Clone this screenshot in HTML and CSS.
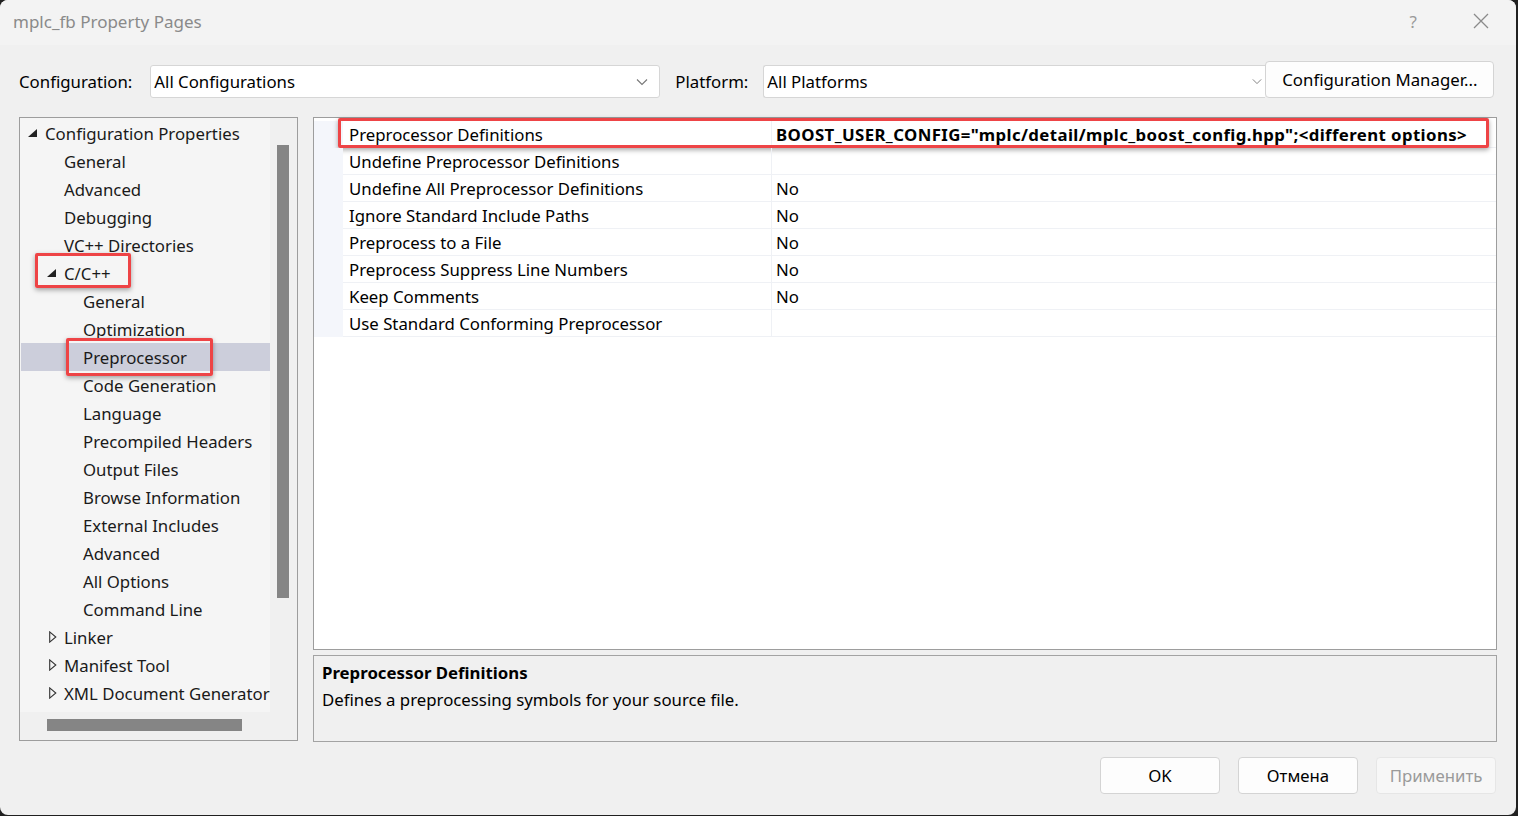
FILE: index.html
```html
<!DOCTYPE html>
<html lang="ru">
<head>
  <meta charset="UTF-8"/>
  <title>mplc_fb Property Pages</title>
  <link rel="stylesheet" href="styles.css">
</head>
<body>
  <div class="window">
    <div class="titlebar">
      <span class="win-title">mplc_fb Property Pages</span>
      <span class="help">?</span>
      <span class="close">
        <svg viewBox="0 0 16 16" width="16" height="16"><path d="M1 1L15 15M15 1L1 15" stroke="#8a8a8a" stroke-width="1.3" fill="none"/></svg>
      </span>
    </div>

    <div class="config-row">
      <span class="label">Configuration:</span>
      <div class="combo combo-conf">
        <span>All Configurations</span>
        <svg class="chev" viewBox="0 0 12 8" width="12" height="8"><path d="M1 1.5L6 6.5L11 1.5" stroke="#777" stroke-width="1.1" fill="none"/></svg>
      </div>
      <span class="label label-plat">Platform:</span>
      <div class="combo combo-plat">
        <span>All Platforms</span>
        <svg class="chev" viewBox="0 0 12 8" width="10" height="7"><path d="M1 1.5L6 6.5L11 1.5" stroke="#777" stroke-width="1.1" fill="none"/></svg>
      </div>
      <button class="btn btn-manager">Configuration Manager...</button>
    </div>

    <div class="main">
      <div class="tree">
        <div class="tree-view">
          <div class="tree-list" id="tree"></div>
          <div class="vscroll"><div class="vthumb"></div></div>
        </div>
        <div class="hscroll"><div class="hthumb"></div></div>
      </div>

      <div class="right">
        <div class="grid">
          <div class="grid-rows" id="grid"></div>
        </div>
        <div class="desc">
          <div class="desc-title">Preprocessor Definitions</div>
          <div class="desc-text">Defines a preprocessing symbols for your source file.</div>
        </div>
      </div>
    </div>

    <div class="footer">
      <button class="btn btn-foot">OK</button>
      <button class="btn btn-foot">Отмена</button>
      <button class="btn btn-foot disabled">Применить</button>
    </div>
  </div>

  <script>
    // tree: [level, text, arrow, mark] arrow: "open" | "closed" | ""
    const treeItems = [
      [0, "Configuration Properties", "open"],
      [1, "General", ""],
      [1, "Advanced", ""],
      [1, "Debugging", ""],
      [1, "VC++ Directories", ""],
      [1, "C/C++", "open", "mark-cpp"],
      [2, "General", ""],
      [2, "Optimization", ""],
      [2, "Preprocessor", "", "mark-pre"],
      [2, "Code Generation", ""],
      [2, "Language", ""],
      [2, "Precompiled Headers", ""],
      [2, "Output Files", ""],
      [2, "Browse Information", ""],
      [2, "External Includes", ""],
      [2, "Advanced", ""],
      [2, "All Options", ""],
      [2, "Command Line", ""],
      [1, "Linker", "closed"],
      [1, "Manifest Tool", "closed"],
      [1, "XML Document Generator", "closed"]
    ];
    const openIcon = '<svg viewBox="0 0 9 8" width="9" height="8"><path d="M9 0V8H0Z" fill="#222"/></svg>';
    const closedIcon = '<svg viewBox="0 0 8 12" width="8" height="12"><path d="M0.7 0.9L6.8 6L0.7 11.1Z" fill="none" stroke="#333" stroke-width="1.1"/></svg>';

    const tree = document.getElementById('tree');
    tree.innerHTML = treeItems.map(([lvl, text, arrow, mark]) => {
      const icon = arrow == "open" ? openIcon : arrow == "closed" ? closedIcon : "";
      const sel = text == "Preprocessor" ? " selected" : "";
      const box = mark ? `<span class="mark ${mark}"></span>` : "";
      return `<div class="tree-row lvl${lvl}${sel}"><span class="arrow ${arrow}">${icon}</span><span class="tree-text">${text}</span>${box}</div>`;
    }).join("");

    const props = [
      ["Preprocessor Definitions", 'BOOST_USER_CONFIG="mplc/detail/mplc_boost_config.hpp";&lt;different options&gt;', true],
      ["Undefine Preprocessor Definitions", ""],
      ["Undefine All Preprocessor Definitions", "No"],
      ["Ignore Standard Include Paths", "No"],
      ["Preprocess to a File", "No"],
      ["Preprocess Suppress Line Numbers", "No"],
      ["Keep Comments", "No"],
      ["Use Standard Conforming Preprocessor", ""]
    ];
    const grid = document.getElementById('grid');
    grid.innerHTML = props.map(([name, val, bold]) => `
      <div class="prop-row">
        <div class="gutter"></div>
        <div class="prop-name">${name}</div>
        <div class="prop-val${bold ? " bold" : ""}">${val}</div>
        ${bold ? '<span class="mark mark-grid"></span>' : ''}
      </div>`).join("");
  </script>
</body>
</html>
```

FILE: styles.css
```css
body { margin:0; background:#202020; font-family:"Noto Sans","Open Sans",sans-serif; font-size:16.8px; color:#000; }
.window {
  width:1516px; height:815px; background:#f0f0f0; border-radius:8px; overflow:hidden;
  display:flex; flex-direction:column;
}
.titlebar {
  height:45px; background:#f3f3f3; display:flex; align-items:center; padding:0 27px 0 13px;
  flex-shrink:0;
}
.win-title { color:#8a8a8a; font-size:17px; margin-top:-3px; }
.help { margin-left:auto; color:#9a9a9a; font-size:17px; margin-right:56px; margin-top:-3px; }
.close { display:flex; margin-top:-3px; }

.config-row {
  display:flex; align-items:flex-end; padding:16px 20px 0 19px; height:37px;
}
.label { height:33px; line-height:33px; margin-right:18px; }
.label-plat { margin-left:15px; margin-right:15px; }
.combo {
  box-sizing:border-box; height:33px; background:#fff; border:1px solid #d6d6d6; border-radius:3px;
  display:flex; align-items:center; padding:0 11px 0 3px;
}
.combo .chev { margin-left:auto; }
.combo-conf { width:510px; }
.combo-plat { width:502px; border-right:none; border-radius:3px 0 0 3px; padding-right:3px; }
.btn {
  box-sizing:border-box; font-family:inherit; background:#fdfdfd; border:1px solid #d4d4d4;
  border-radius:4px; color:#000; font-size:16.8px; padding:0;
}
.btn-manager { width:229px; height:37px; }

.main { display:flex; gap:15px; padding:19px 19px 0 19px; }
.tree {
  box-sizing:border-box; width:279px; height:624px; border:1px solid #9d9d9d;
  display:flex; flex-direction:column;
}
.tree-view { display:flex; height:594px; }
.tree-list { width:250px; background:#f5f5f5; position:relative; padding-top:1px; }
.vscroll { flex:1; padding:27px 0 0 7px; }
.vthumb { width:12px; height:453px; background:#858585; }
.hscroll { padding:7px 0 0 27px; }
.hthumb { width:195px; height:12px; background:#858585; }

.tree-row { height:28px; display:flex; align-items:center; position:relative; white-space:nowrap; }
.tree-row.lvl0 { padding-left:8px; }
.tree-row.lvl1 { padding-left:27px; }
.tree-row.lvl2 { padding-left:46px; }
.tree-row.selected { background:#cccedb; margin-left:1px; padding-left:45px; }
.arrow { width:17px; flex-shrink:0; display:flex; align-items:center; }
.arrow.closed { padding-left:2px; width:15px; }
.tree-text { color:#1a1a1a; }

.mark {
  position:absolute; border:3px solid #ee4446; border-radius:2px;
  box-shadow:0 2px 5px rgba(0,0,0,.35); pointer-events:none;
}
.mark-cpp { left:15px; top:-6px; width:90px; height:29px; }
.mark-pre { left:45px; top:-5px; width:141px; height:32px; }

.right { width:1184px; display:flex; flex-direction:column; gap:5px; }
.grid {
  box-sizing:border-box; height:533px; border:1px solid #9d9d9d; background:#fff; padding-top:3px;
}
.prop-row { display:flex; height:27px; position:relative; }
.gutter { width:29px; background:#f4f6fb; }
.prop-name, .prop-val {
  box-sizing:border-box; border-bottom:1px solid #eff1f5; display:flex; align-items:center;
}
.prop-name { width:429px; padding-left:6px; border-right:1px solid #eff1f5; }
.prop-val { flex:1; padding-left:4px; white-space:nowrap; }
.prop-val.bold { font-weight:bold; letter-spacing:0.4px; }
.mark-grid { left:24px; top:-3px; width:1145px; height:24px; }

.desc {
  box-sizing:border-box; height:87px; border:1px solid #a3a3a3; padding:4px 8px;
}
.desc-title { font-weight:bold; line-height:26px; }
.desc-text { line-height:28px; }

.footer { display:flex; justify-content:flex-end; gap:18px; padding:15px 20px 0 0; }
.btn-foot { width:120px; height:37px; }
.btn-foot.disabled { color:#9a9a9a; background:#f7f7f7; border-color:#e6e6e6; }
```
